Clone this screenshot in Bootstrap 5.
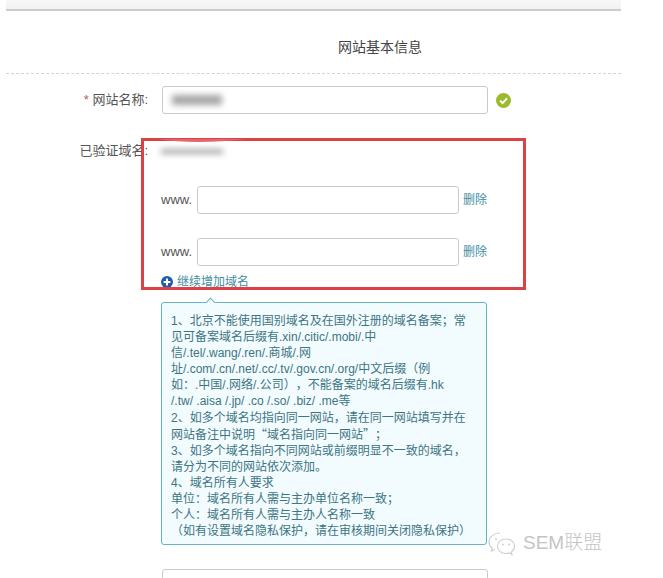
<!DOCTYPE html>
<html lang="zh-CN">
<head>
  <meta charset="UTF-8" />
  <meta name="viewport" content="width=device-width, initial-scale=1.0"/>
  <title>网站基本信息</title>
  <link href="https://cdn.jsdelivr.net/npm/bootstrap@5.3.0/dist/css/bootstrap.min.css" rel="stylesheet"/>
  <style>
    body {
      font-family: "Liberation Sans", "Noto Sans CJK SC", sans-serif;
      background: #fff;
      color: #555;
      font-size: 12px;
      overflow: hidden;
      text-spacing-trim: space-all;
    }

    .page-wrap {
      position: relative;
      width: 621px;
      height: 578px;
      overflow: hidden;
    }

    .top-strip {
      margin-left: 6px;
      height: 11px;
      background: linear-gradient(to bottom, #f8f8f8, #f1f1f1);
      border-bottom: 2px solid #cdcdcd;
    }

    .form-title {
      margin: 25px 0 0 338px;
      height: 22px;
      line-height: 22px;
      font-size: 14px;
      color: #444;
    }

    .dash-line {
      margin: 15px 0 0 6px;
      border-top: 1px dashed #d4d4d4;
    }

    .name-row { margin-top: 12px; }
    .verified-row { margin-top: 27px; height: 20px; }

    .field-label {
      width: 148px;
      margin-right: 14px;
      text-align: right;
      font-size: 13px;
      line-height: 20px;
      color: #555;
      white-space: nowrap;
    }

    .req-star { color: #c9506a; }

    .form-control.site-input {
      border: 1px solid #c9c9cf;
      border-radius: 3px;
      box-shadow: none;
      padding: 0 8px;
    }

    .name-input { width: 326px; height: 28px; }
    .domain-input { width: 262px; height: 28px; }

    .blur-wrap { position: relative; }

    .blur-blob {
      position: absolute;
      background: #a6a6a6;
      filter: blur(3px);
    }

    .blob-name { left: 10px; top: 9px; width: 50px; height: 10px; }

    .blob-domain {
      display: block;
      width: 62px;
      height: 5px;
      margin: 8px 0 0 -1px;
      position: static;
    }

    .check-icon { margin-left: 8px; width: 15px; height: 15px; }

    .indent-col { margin-left: 161px; }

    .www-row { margin-top: 25px; }
    .www-row + .www-row { margin-top: 24px; }

    .www-text {
      width: 36px;
      font-size: 13px;
      color: #555;
    }

    .del-link {
      margin-left: 4px;
      color: #3f8ea3;
      text-decoration: none;
      font-size: 12px;
    }

    .add-link {
      margin-top: 8px;
      height: 16px;
      color: #3f8ea3;
      text-decoration: none;
      font-size: 12px;
      line-height: 16px;
    }

    .tip-box {
      position: relative;
      width: 326px;
      height: 243px;
      margin-top: 12px;
      padding: 10px 9px 0;
      background: #f2fbfe;
      border: 1px solid #62b6c2;
      border-radius: 3px;
      color: #3d7582;
      font-size: 12px;
      line-height: 16.1px;
      white-space: nowrap;
    }

    .tip-box::before {
      content: "";
      position: absolute;
      left: 45px;
      top: -4px;
      width: 7px;
      height: 7px;
      background: #f2fbfe;
      border-left: 1px solid #62b6c2;
      border-top: 1px solid #62b6c2;
      transform: rotate(45deg);
    }

    .cjk-punct { font-family: "Noto Sans CJK SC", sans-serif; }

    .next-input {
      width: 326px;
      height: 28px;
      margin: 24px 0 0 1px;
    }

    .red-frame {
      position: absolute;
      left: 141px;
      top: 138px;
      width: 385px;
      height: 152px;
      border: 3px solid #dc4245;
      pointer-events: none;
    }

    .red-swoosh {
      position: absolute;
      left: 150px;
      top: 139px;
    }

    .wm-mark {
      position: absolute;
      left: 487px;
      top: 530px;
      color: #c4c4c4;
      font-size: 19px;
      line-height: 26px;
      font-weight: 300;
      white-space: nowrap;
    }

    .wm-mark span { margin-left: -2px; }
  </style>
</head>
<body class="m-0">

<div class="page-wrap">
  <div class="top-strip"></div>
  <div class="form-title">网站基本信息</div>
  <div class="dash-line"></div>

  <div class="d-flex align-items-center name-row">
    <div class="field-label"><span class="req-star">*</span> 网站名称:</div>
    <div class="blur-wrap">
      <input class="form-control site-input name-input" type="text" />
      <span class="blur-blob blob-name"></span>
    </div>
    <svg class="check-icon" viewBox="0 0 16 16">
      <circle cx="8" cy="8" r="8" fill="#9bbb2c"/>
      <path d="M4.4 8.2 7 10.800 11.800 5.600" fill="none" stroke="#fff" stroke-width="2"/>
    </svg>
  </div>

  <div class="d-flex verified-row">
    <div class="field-label">已验证域名:</div>
    <span class="blur-blob blob-domain"></span>
  </div>

  <div class="indent-col">
    <div class="d-flex align-items-center www-row">
      <span class="www-text">www.</span>
      <input class="form-control site-input domain-input" type="text" />
      <a class="del-link" href="#">删除</a>
    </div>
    <div class="d-flex align-items-center www-row">
      <span class="www-text">www.</span>
      <input class="form-control site-input domain-input" type="text" />
      <a class="del-link" href="#">删除</a>
    </div>

    <a class="add-link d-flex align-items-center gap-1" href="#">
      <svg width="12" height="12" viewBox="0 0 12 12">
        <circle cx="6" cy="6" r="6" fill="#1f5dab"/>
        <path d="M6 2.600V9.400M2.600 6H9.400" stroke="#fff" stroke-width="2"/>
      </svg>
      继续增加域名
    </a>

    <div class="tip-box">
      1、北京不能使用国别域名及在国外注册的域名备案；常<br>
      见可备案域名后缀有.xin/.citic/.mobi/.中<br>
      信/.tel/.wang/.ren/.商城/.网<br>
      址/.com/.cn/.net/.cc/.tv/.gov.cn/.org/中文后缀（例<br>
      如：.中国/.网络/.公司），不能备案的域名后缀有.hk<br>
      /.tw/ .aisa /.jp/ .co /.so/ .biz/ .me等<br>
      2、如多个域名均指向同一网站，请在同一网站填写并在<br>
      网站备注中说明<span class="cjk-punct">“</span>域名指向同一网站<span class="cjk-punct">”</span>；<br>
      3、如多个域名指向不同网站或前缀明显不一致的域名，<br>
      请分为不同的网站依次添加。<br>
      4、域名所有人要求<br>
      单位：域名所有人需与主办单位名称一致；<br>
      个人：域名所有人需与主办人名称一致<br>
      （如有设置域名隐私保护，请在审核期间关闭隐私保护）
    </div>

    <input class="form-control site-input next-input" type="text" />
  </div>

  <div class="red-frame"></div>
  <svg class="red-swoosh" width="100" height="6" viewBox="0 0 100 6">
    <path d="M8 0Q45 6 96 0Z" fill="#e4666a"/>
  </svg>
</div>

<div class="wm-mark d-flex align-items-center gap-2">
  <svg width="30" height="26" viewBox="0 0 30 26" fill="none" stroke="#cfcfcf" stroke-width="1.2">
    <path d="M13 3C7 3 2 7 2 12c0 2.500 1.300 4.600 3.300 6L4.500 21l3.200-1.700"/>
    <path d="M19 9c-5 0-8.500 3.300-8.500 7.300S14 23.500 19 23.500c1.200 0 2.300-.2 3.300-.5l2.700 1.500-.7-2.600c2-1.300 3.200-3.300 3.200-5.600C27.500 12.300 24 9 19 9Z"/>
    <circle cx="9" cy="9" r="1" fill="#cfcfcf" stroke="none"/>
    <circle cx="16" cy="14.500" r="1" fill="#cfcfcf" stroke="none"/>
    <circle cx="22" cy="14.500" r="1" fill="#cfcfcf" stroke="none"/>
  </svg>
  <span>SEM联盟</span>
</div>

<script src="https://cdn.jsdelivr.net/npm/bootstrap@5.3.0/dist/js/bootstrap.bundle.min.js"></script>
</body>
</html>
